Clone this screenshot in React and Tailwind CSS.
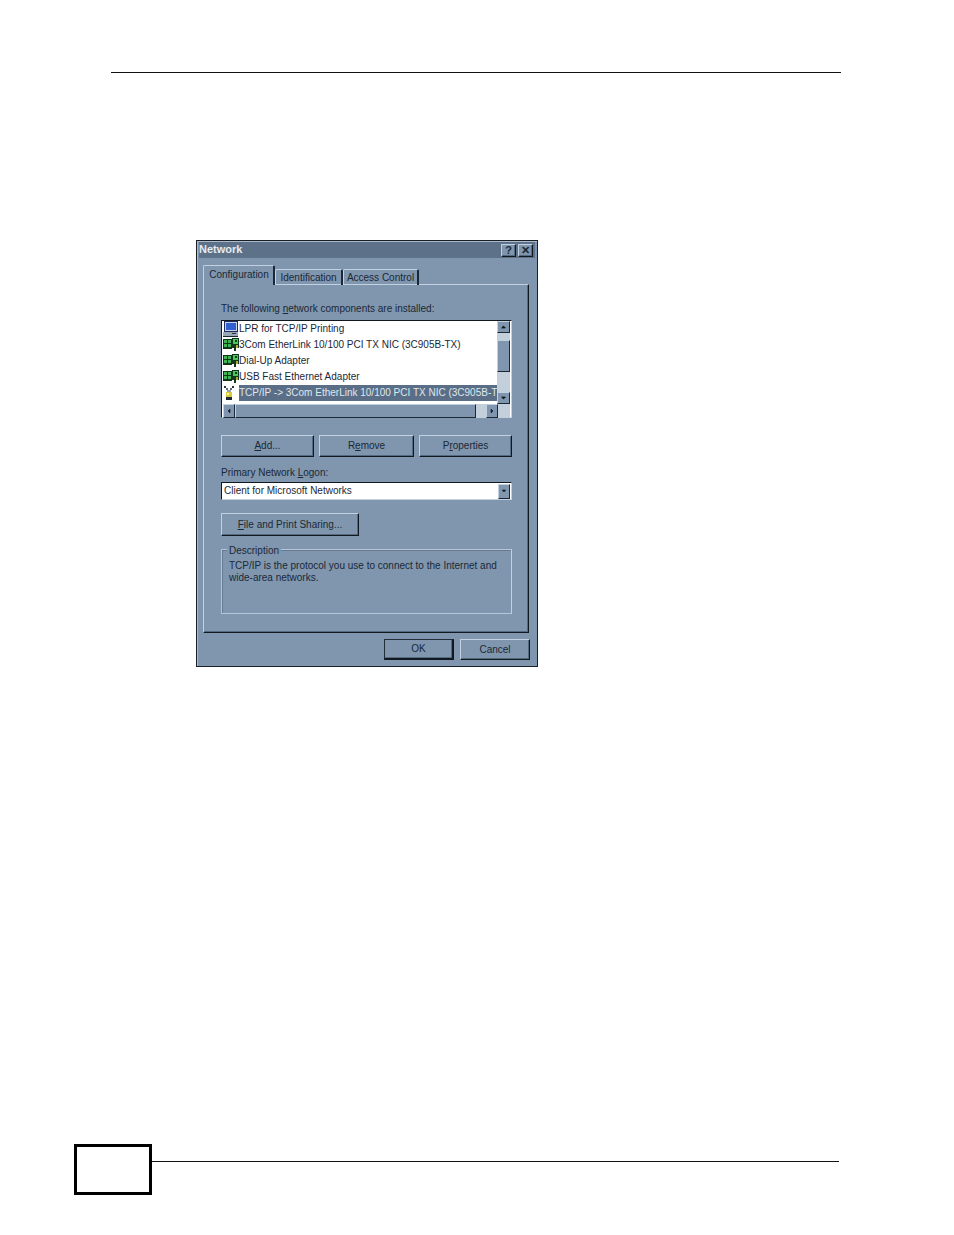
import React from "react";

const Btn = ({ className = "", children }) => (
  <div className={`flex items-center justify-center bg-[#7f96ae] border border-t-[#c2d1df] border-l-[#c2d1df] border-r-[#101820] border-b-[#101820] shadow-[inset_-1px_-1px_0_#556a80] text-[10px] leading-none text-[#1b2836] ${className}`}>
    {children}
  </div>
);

const Tab = ({ className = "", children }) => (
  <div className={`flex items-center justify-center whitespace-nowrap border-t border-l border-t-[#c2d1df] border-l-[#c2d1df] border-r-2 border-r-[#1b2836] rounded-t-[2px] text-[10px] leading-none text-[#1b2836] ${className}`}>
    {children}
  </div>
);

const Monitor = () => (
  <svg width="16" height="16" viewBox="0 0 16 16" shapeRendering="crispEdges" className="shrink-0">
    <rect x="1" y="0" width="14" height="11" fill="#1c2a5c" />
    <rect x="2" y="1" width="12" height="9" fill="#c7d4e6" />
    <rect x="3" y="2" width="10" height="7" fill="#2f5fd0" />
    <rect x="0" y="11" width="15" height="4" fill="#9aa6b2" />
    <rect x="0" y="15" width="15" height="1" fill="#1b2530" />
    <rect x="9" y="12" width="4" height="1" fill="#2b3640" />
  </svg>
);

const Nic = () => (
  <svg width="16" height="14" viewBox="0 0 16 14" shapeRendering="crispEdges" className="shrink-0">
    <rect x="0" y="1" width="9" height="10" fill="#10351c" />
    <rect x="1" y="2" width="3" height="3" fill="#3fb34f" />
    <rect x="5" y="2" width="3" height="3" fill="#3fb34f" />
    <rect x="1" y="6" width="3" height="3" fill="#3fb34f" />
    <rect x="5" y="6" width="3" height="3" fill="#3fb34f" />
    <rect x="9" y="0" width="7" height="10" fill="#0f3a1f" />
    <rect x="10" y="1" width="5" height="5" fill="#48c95a" />
    <rect x="12" y="2" width="2" height="2" fill="#0f3a1f" />
    <rect x="11" y="6" width="2" height="7" fill="#12361e" />
    <rect x="13" y="7" width="2" height="3" fill="#b9a83a" />
  </svg>
);

const Plug = () => (
  <svg width="16" height="16" viewBox="0 0 16 16" shapeRendering="crispEdges" className="shrink-0">
    <rect x="1" y="1" width="2" height="2" fill="#2a3440" />
    <rect x="9" y="1" width="2" height="2" fill="#2a3440" />
    <rect x="3" y="3" width="2" height="2" fill="#5d6a78" />
    <rect x="7" y="3" width="2" height="2" fill="#5d6a78" />
    <rect x="4" y="5" width="4" height="2" fill="#9aa4ae" />
    <rect x="3" y="7" width="6" height="5" fill="#d9c93a" />
    <rect x="4" y="8" width="2" height="2" fill="#fff59a" />
    <rect x="3" y="12" width="6" height="3" fill="#1f2a36" />
  </svg>
);

const Arrow = ({ dir }) => {
  const pts = {
    up: "4,7 8,7 6,5",
    down: "4,5 8,5 6,7",
    left: "7,4 7,8 5,6",
    right: "5,4 5,8 7,6",
  }[dir];
  return (
    <svg width="12" height="12" viewBox="0 0 12 12" className="block">
      <polygon points={pts} fill="#101820" stroke="#101820" strokeWidth="1" />
    </svg>
  );
};

const ScrollBtn = ({ dir, className = "" }) => (
  <div className={`flex items-center justify-center bg-[#7f96ae] border border-t-[#c2d1df] border-l-[#c2d1df] border-r-[#1b2836] border-b-[#1b2836] ${className}`}>
    <Arrow dir={dir} />
  </div>
);

const Row = ({ icon, children, selected }) => (
  <div className="flex h-4 items-center">
    <div className="w-4 flex justify-center items-center shrink-0">{icon}</div>
    <div className={`h-4 flex-1 flex items-center whitespace-nowrap overflow-hidden text-[10px] leading-none ${selected ? "bg-[#5a6f87] text-[#dfe7ee]" : "text-[#1b2836]"}`}>
      {children}
    </div>
  </div>
);

export default function App() {
  return (
    <div className="w-[954px] h-[1235px] bg-white flex flex-col font-['Liberation_Sans',Arial,sans-serif]">
      <div className="ml-[111px] mt-[72px] w-[730px] h-px bg-[#111] shrink-0" />

      {/* dialog */}
      <div className="ml-[196px] mt-[167px] w-[342px] h-[427px] shrink-0 bg-[#7f96ae] border border-[#1a1f26] shadow-[inset_1px_1px_0_#a9bbcd] flex flex-col px-[6px] pt-px">
        {/* title bar */}
        <div className="-mx-[4px] h-[16px] bg-[#5d7289] flex items-center justify-between pr-[2px] shrink-0">
          <span className="text-[11px] font-bold leading-none text-[#e4ebf1] mb-[2px]">Network</span>
          <div className="flex items-center">
            <Btn className="w-[15px] h-[13px] font-bold !text-[11px]">?</Btn>
            <Btn className="ml-[2px] w-[15px] h-[13px] font-bold !text-[11px]">✕</Btn>
          </div>
        </div>

        {/* tabs */}
        <div className="flex items-end mt-[7px] h-[20px] shrink-0 relative z-10">
          <Tab className="w-[72px] h-[20px] bg-[#7f96ae] pb-px pl-px">Configuration</Tab>
          <Tab className="w-[68px] h-[16px]">Identification</Tab>
          <Tab className="w-[76px] h-[16px]">Access Control</Tab>
        </div>

        {/* panel */}
        <div className="-mt-px w-[326px] h-[349px] shrink-0 border border-t-[#c2d1df] border-l-[#c2d1df] border-r-[#101820] border-b-[#101820] shadow-[inset_-1px_-1px_0_#556a80] flex flex-col pl-[17px] pr-[16px]">
          <div className="mt-[17px] h-[13px] flex items-center text-[10px] leading-none text-[#1b2836] whitespace-nowrap">
            The following&nbsp;<u>n</u>etwork components are installed:
          </div>

          {/* list box */}
          <div className="mt-[5px] w-[291px] h-[98px] shrink-0 border border-t-[#101820] border-l-[#101820] border-r-[#c2d1df] border-b-[#c2d1df] bg-white flex flex-col">
            <div className="flex h-[83px] shrink-0">
              <div className="flex-1 min-w-0 overflow-hidden pl-[1px]">
                <Row icon={<Monitor />}>LPR for TCP/IP Printing</Row>
                <Row icon={<Nic />}>3Com EtherLink 10/100 PCI TX NIC (3C905B-TX)</Row>
                <Row icon={<Nic />}>Dial-Up Adapter</Row>
                <Row icon={<Nic />}>USB Fast Ethernet Adapter</Row>
                <Row icon={<Plug />} selected>TCP/IP -&gt; 3Com EtherLink 10/100 PCI TX NIC (3C905B-TX)</Row>
              </div>
              <div className="w-[13px] shrink-0 bg-[#c3d0dc] flex flex-col mr-px">
                <ScrollBtn dir="up" className="h-[12px]" />
                <div className="h-[7px] shrink-0" />
                <div className="h-[32px] shrink-0 bg-[#7f96ae] border border-t-[#c2d1df] border-l-[#c2d1df] border-r-[#1b2836] border-b-[#1b2836]" />
                <div className="flex-1" />
                <ScrollBtn dir="down" className="h-[12px]" />
              </div>
            </div>
            <div className="flex flex-1 bg-[#c3d0dc] ml-px mr-px mb-px">
              <ScrollBtn dir="left" className="w-[12px]" />
              <div className="w-[241px] bg-[#7f96ae] border border-t-[#c2d1df] border-l-[#c2d1df] border-r-[#1b2836] border-b-[#1b2836]" />
              <div className="w-[10px]" />
              <ScrollBtn dir="right" className="w-[12px]" />
            </div>
          </div>

          {/* action buttons */}
          <div className="mt-[17px] flex gap-[5px] shrink-0">
            <Btn className="w-[93px] h-[22px]"><span><u>A</u>dd...</span></Btn>
            <Btn className="w-[95px] h-[22px]"><span>R<u>e</u>move</span></Btn>
            <Btn className="w-[93px] h-[22px]"><span>P<u>r</u>operties</span></Btn>
          </div>

          <div className="mt-[9px] h-[13px] flex items-center text-[10px] leading-none text-[#1b2836] whitespace-nowrap">
            Primary Network&nbsp;<u>L</u>ogon:
          </div>

          {/* combo */}
          <div className="mt-[3px] w-[291px] h-[18px] shrink-0 border border-t-[#101820] border-l-[#101820] border-r-[#c2d1df] border-b-[#c2d1df] bg-white flex items-center">
            <span className="flex-1 pl-[2px] text-[10px] leading-none text-[#1b2836] whitespace-nowrap">Client for Microsoft Networks</span>
            <ScrollBtn dir="down" className="w-[12px] h-[15px] mr-px" />
          </div>

          <Btn className="mt-[13px] w-[138px] h-[23px] shrink-0"><span><u>F</u>ile and Print Sharing...</span></Btn>

          {/* description group */}
          <div className="relative mt-[13px] w-[291px] h-[65px] shrink-0 border border-[#b6c6d6] border-r-[#c2d1df] shadow-[inset_1px_1px_0_#66798e] px-[7px] pt-[10px] text-[10px] leading-[12px] text-[#1b2836]">
            <div className="absolute -top-[6px] left-[5px] px-[2px] bg-[#7f96ae] h-[13px] flex items-center leading-none">Description</div>
            TCP/IP is the protocol you use to connect to the Internet and wide-area networks.
          </div>
        </div>

        {/* bottom buttons */}
        <div className="mt-[6px] mr-px flex justify-end gap-[6px] shrink-0">
          <Btn className="w-[70px] h-[21px] !border-[#101820] !border-t-[#222d3a] !border-l-[#222d3a] !border-r-2 !border-b-2">OK</Btn>
          <Btn className="w-[70px] h-[21px]">Cancel</Btn>
        </div>
      </div>

      {/* footer */}
      <div className="mt-[477px] ml-[74px] flex items-start shrink-0">
        <div className="w-[78px] h-[51px] border-[3px] border-black bg-white shrink-0" />
        <div className="mt-[17px] w-[687px] h-px bg-[#111]" />
      </div>
    </div>
  );
}
